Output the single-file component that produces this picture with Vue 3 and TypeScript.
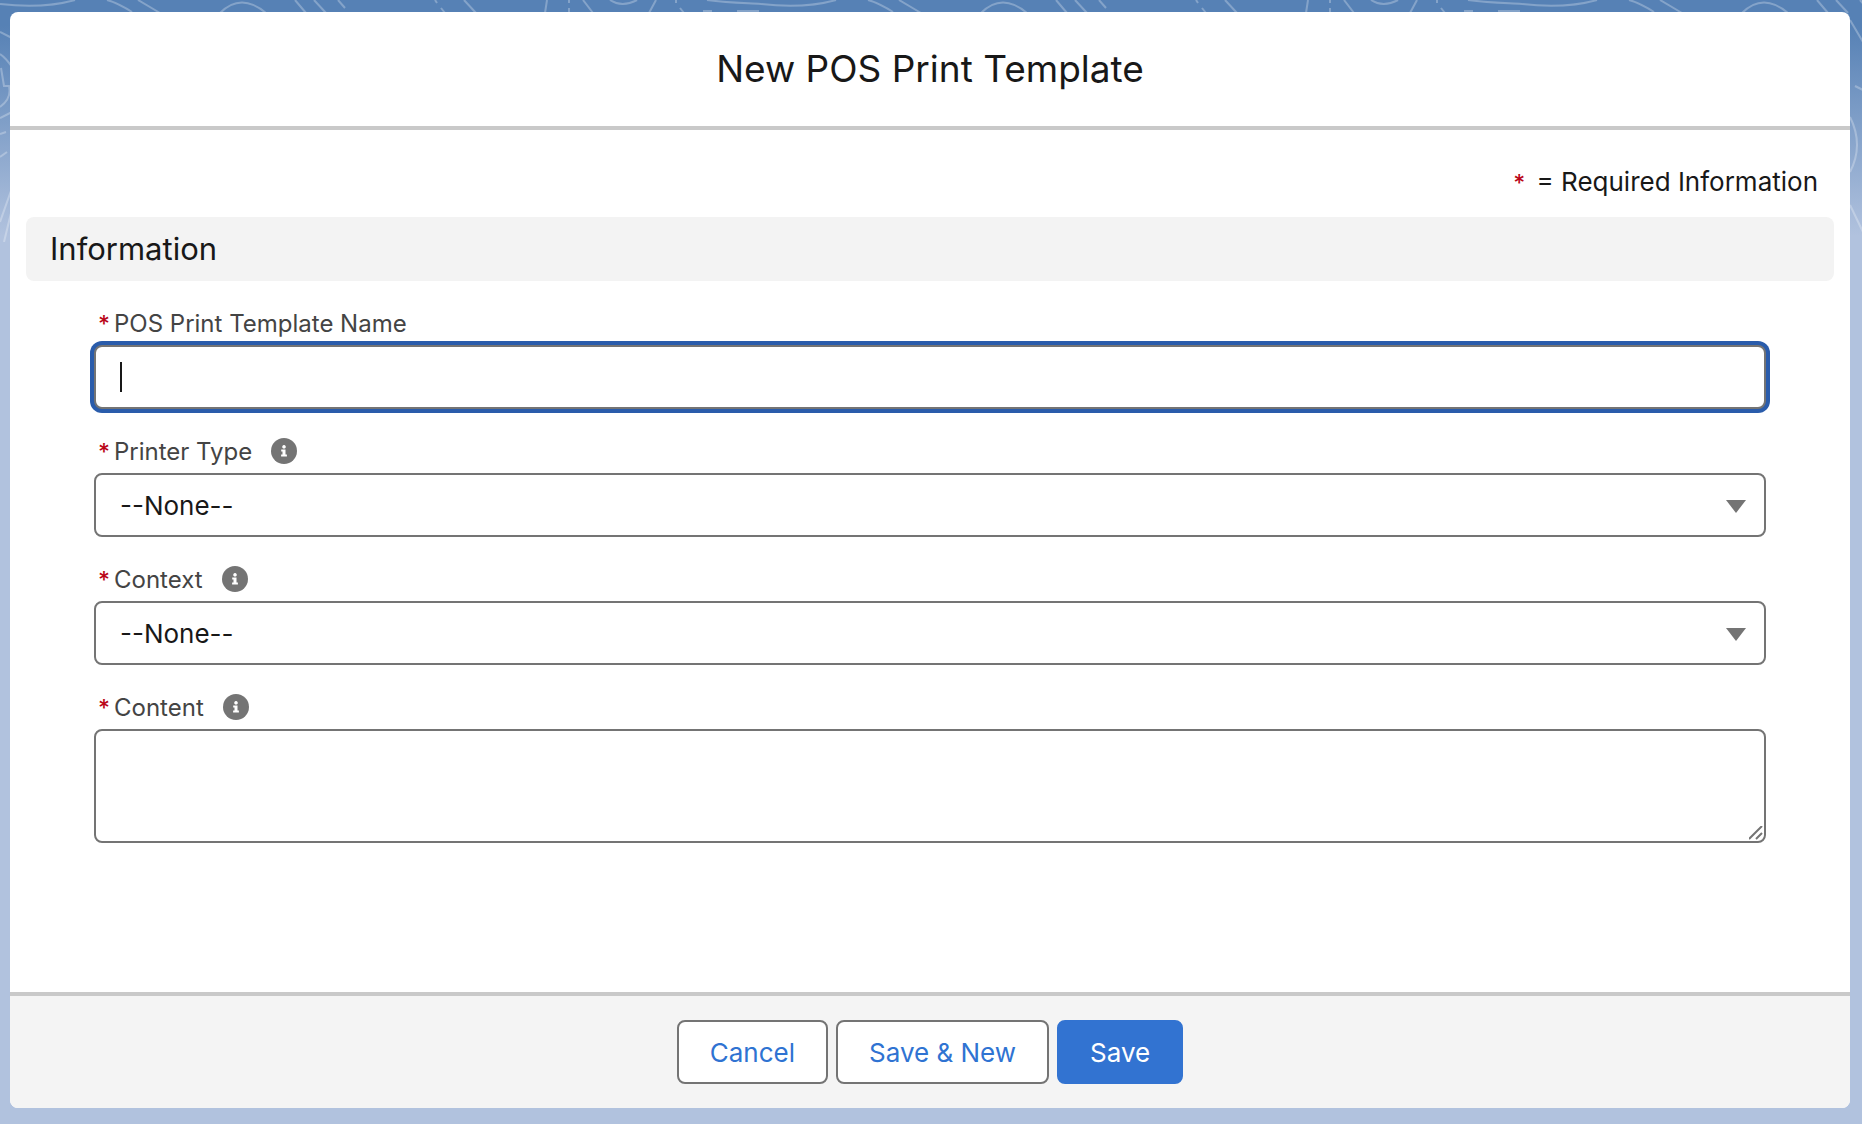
<script setup lang="ts">
import { onMounted, ref } from 'vue'

interface Picklist {
  id: string
  label: string
  options: string[]
}

const picklists: Picklist[] = [
  { id: 'printer-type', label: 'Printer Type', options: ['--None--'] },
  { id: 'context', label: 'Context', options: ['--None--'] },
]

const name = ref('')
const content = ref('')
const values = ref<Record<string, string>>({ 'printer-type': '--None--', context: '--None--' })
const nameInput = ref<HTMLInputElement | null>(null)

onMounted(() => nameInput.value?.focus())
</script>

<template>
  <div class="page">
    <svg class="contours" aria-hidden="true">
      <defs>
        <pattern id="contour-tile" width="761" height="242" patternUnits="userSpaceOnUse">
          <g fill="none" stroke="#ffffff" stroke-opacity="0.27" stroke-width="2">
            <path d="M0 4C25 7 50 7 75 0M707 0C730 3 745 3 761 4" />
            <path d="M107 0Q118 3 132 12M138 0L160 13M220 13Q241 -8 266 13" />
            <path d="M295 0L306 13M314 0L326 13M338 0L345 8M435 0l2 3M441 8l4 5M464 0l12 13" />
            <path d="M547 0L545 13M569 0v3M569 8v5M583 0l10 13M610 0Q622 8 637 0M656 0l-7 13" />
            <path d="M676 0v3M680 8l4 5M703 11h9M737 11h22" />
            <path d="M328 20L341 42M333 86L341 90M328 117Q342 145 328 172M328 205L341 232" />
            <path d="M0 32L12 38M0 54Q6 58 12 67M1 68L4 86H9Q12 98 0 107M0 118L12 112M0 134L6 132M0 157L7 152" />
            <path d="M12 188L0 222M12 209L4 242" />
          </g>
        </pattern>
      </defs>
      <rect width="100%" height="242" fill="url(#contour-tile)" />
    </svg>

    <form class="modal" aria-labelledby="modal-title" @submit.prevent>
      <header class="modal-header">
        <h1 id="modal-title">New POS Print Template</h1>
      </header>

      <main class="modal-body">
        <p class="legend"><span class="star">*</span> = Required Information</p>
        <h2 class="section">Information</h2>

        <div class="fields">
          <div class="field">
            <div class="label-row">
              <label for="template-name"><span class="star">*</span>POS Print Template Name</label>
            </div>
            <div class="control-wrap">
              <input id="template-name" ref="nameInput" v-model="name" class="control" type="text" required />
              <span v-if="!name" class="caret" aria-hidden="true"></span>
            </div>
          </div>

          <div v-for="list in picklists" :key="list.id" class="field">
            <div class="label-row">
              <label :for="list.id"><span class="star">*</span>{{ list.label }}</label>
              <button class="help" type="button" :aria-label="`Help for ${list.label}`">
                <svg viewBox="0 0 26 26" aria-hidden="true">
                  <circle cx="13" cy="13" r="13" />
                  <path d="M13 7a1.800 1.800 0 1 0 .01 0zM10.200 11.500h4.300v5h1.400v2h-5.800v-2h1.400v-3h-1.300z" />
                </svg>
              </button>
            </div>
            <div class="control-wrap">
              <select :id="list.id" v-model="values[list.id]" class="control" required>
                <option v-for="option in list.options" :key="option">{{ option }}</option>
              </select>
              <svg class="arrow" viewBox="0 0 20 13" aria-hidden="true">
                <path d="M0 0H20L10 13Z" />
              </svg>
            </div>
          </div>

          <div class="field">
            <div class="label-row">
              <label for="content"><span class="star">*</span>Content</label>
              <button class="help" type="button" aria-label="Help for Content">
                <svg viewBox="0 0 26 26" aria-hidden="true">
                  <circle cx="13" cy="13" r="13" />
                  <path d="M13 7a1.800 1.800 0 1 0 .01 0zM10.200 11.500h4.300v5h1.400v2h-5.800v-2h1.400v-3h-1.300z" />
                </svg>
              </button>
            </div>
            <div class="control-wrap">
              <textarea id="content" v-model="content" class="control" required></textarea>
              <svg class="grip" viewBox="0 0 14 14" aria-hidden="true">
                <path d="M0 13L13 0M7 13L13 7" />
              </svg>
            </div>
          </div>
        </div>
      </main>

      <footer class="modal-footer">
        <button type="button" class="btn">Cancel</button>
        <button type="button" class="btn">Save &amp; New</button>
        <button type="submit" class="btn primary">Save</button>
      </footer>
    </form>
  </div>
</template>

<style>
body {
  margin: 0;
  background: #b1c2de;
}
</style>

<style scoped>
.page {
  position: relative;
  box-sizing: border-box;
  display: flex;
  min-height: 100vh;
  padding: 12px 12px 16px 10px;
  background: linear-gradient(#5681b5 0, #5681b5 26px, #b1c2de 236px);
  color: #181818;
  font-family: Inter, "Liberation Sans", sans-serif;
  font-size: 26px;
}

.contours {
  position: absolute;
  top: 0;
  left: 0;
  width: 100%;
  height: 242px;
}

.modal {
  position: relative;
  display: flex;
  flex: 1;
  flex-direction: column;
  overflow: hidden;
  border-radius: 8px;
  background: #ffffff;
}

.modal-header {
  padding: 32px;
  border-bottom: 4px solid #c9c9c9;
}

h1 {
  margin: 0;
  font-size: 37px;
  font-weight: 400;
  line-height: 50px;
  text-align: center;
}

.modal-body {
  flex: 1;
  padding: 32px 16px;
}

.legend {
  margin: 0;
  padding: 0 16px 15px;
  line-height: 40px;
  text-align: right;
}

.star {
  margin-right: 4px;
  color: #ba0517;
  font-size: 23px;
  font-weight: 500;
  line-height: 1;
}

.section {
  margin: 0 0 24px;
  padding: 0 24px;
  border-radius: 8px;
  background: #f3f3f3;
  font-size: 31px;
  font-weight: 400;
  line-height: 64px;
}

.fields {
  display: flex;
  flex-direction: column;
  gap: 24px;
  padding: 0 68px;
}

.label-row {
  display: flex;
  align-items: center;
  gap: 19px;
  height: 36px;
  margin-bottom: 4px;
  padding-left: 4px;
  color: #444444;
  font-size: 24px;
}

.help {
  display: flex;
  padding: 0;
  border: 0;
  background: none;
}

.help svg {
  width: 26px;
  height: 26px;
  fill: #747474;
}

.help path {
  fill: #ffffff;
}

.control {
  display: block;
  box-sizing: border-box;
  width: 100%;
  height: 64px;
  padding: 0 24px;
  border: 2px solid #747474;
  border-radius: 8px;
  outline: none;
  background: #ffffff;
  color: #181818;
  font: inherit;
  appearance: none;
}

.control:focus {
  box-shadow: 0 0 0 4px #2a5cab;
}

.control-wrap {
  position: relative;
}

.caret {
  position: absolute;
  top: 17px;
  left: 26px;
  width: 2px;
  height: 30px;
  background: #181818;
  pointer-events: none;
}

.arrow {
  position: absolute;
  top: 27px;
  right: 20px;
  width: 20px;
  height: 13px;
  fill: #747474;
  pointer-events: none;
}

textarea.control {
  height: 114px;
  padding: 16px 24px;
  resize: none;
}

.grip {
  position: absolute;
  right: 3px;
  bottom: 3px;
  width: 14px;
  height: 14px;
  fill: none;
  stroke: #747474;
  stroke-width: 2;
  pointer-events: none;
}

.modal-footer {
  display: flex;
  justify-content: center;
  gap: 8px;
  padding: 24px;
  border-top: 4px solid #c9c9c9;
  background: #f4f4f4;
}

.btn {
  height: 64px;
  padding: 0 31px;
  border: 2px solid #747474;
  border-radius: 8px;
  background: #ffffff;
  color: #2f73d2;
  font: inherit;
}

.btn.primary {
  border-color: #3273d1;
  background: #3273d1;
  color: #ffffff;
}
</style>
